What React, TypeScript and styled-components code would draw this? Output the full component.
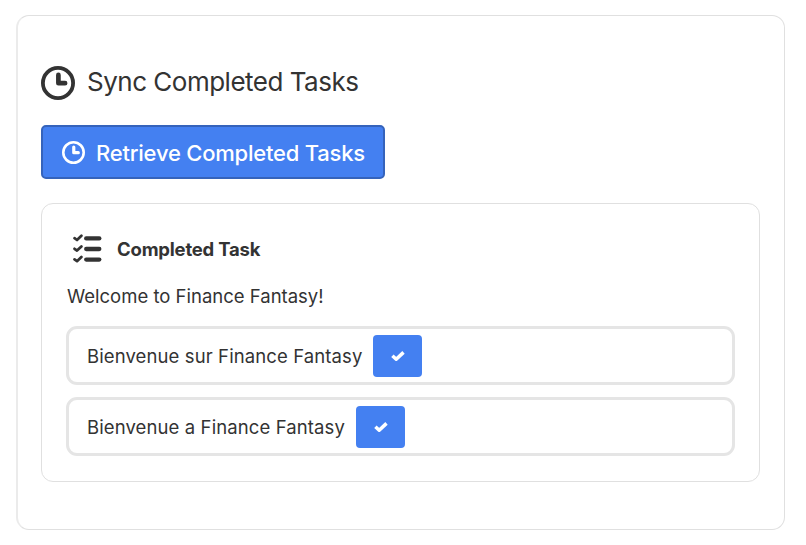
import React from "react";
import styled, { createGlobalStyle } from "styled-components";

const GlobalStyle = createGlobalStyle`
  * { box-sizing: border-box; }
  body {
    margin: 0;
    background: #fff;
    color: #333;
    font-family: Inter, "Liberation Sans", sans-serif;
  }
`;

const Card = styled.main`
  width: 769px;
  height: 515px;
  margin: 15px 0 0 16px;
  padding: 49px 24px 0 23px;
  border: 1px solid #e0e0e0;
  border-left: 2px solid #ebebeb;
  border-radius: 13px;
`;

const Heading = styled.h1`
  display: flex;
  align-items: center;
  gap: 12px;
  height: 36px;
  margin: 0 0 24px;
  font-size: 26px;
  font-weight: 400;
  letter-spacing: -0.5px;
  white-space: nowrap;
`;

const HeadingText = styled.span`
  padding-bottom: 3px;
`;

const RetrieveButton = styled.button`
  display: flex;
  align-items: center;
  gap: 11px;
  width: 344px;
  height: 54px;
  padding: 1px 0 0 19px;
  border: 2px solid #3563bb;
  border-radius: 5px;
  background: #4480f1;
  color: #fff;
  font: 500 22px Inter, sans-serif;
  letter-spacing: -0.22px;
  white-space: nowrap;
`;

const Panel = styled.section`
  width: 719px;
  height: 279px;
  margin-top: 24px;
  padding: 23px 24px 0;
  border: 1px solid #e0e0e0;
  border-radius: 12px;
`;

const PanelTitle = styled.h2`
  display: flex;
  align-items: center;
  gap: 15px;
  height: 43px;
  margin: 0;
  padding-left: 7px;
  font-size: 18.5px;
  font-weight: 700;
  letter-spacing: -0.2px;
`;

const Welcome = styled.p`
  height: 24px;
  margin: 14px 0 18px;
  font-size: 18.5px;
  line-height: 24px;
  letter-spacing: 0;
  padding-left: 1px;
`;

const TaskList = styled.ul`
  display: flex;
  flex-direction: column;
  gap: 12px;
  margin: 0;
  padding: 0;
  list-style: none;
`;

const TaskRow = styled.li`
  display: flex;
  align-items: center;
  height: 59px;
  padding-left: 18px;
  border: 3px solid #e5e5e5;
  border-radius: 11px;
  font-size: 18.5px;
`;

const TaskName = styled.span<{ $width: number }>`
  width: ${(p) => p.$width}px;
  letter-spacing: 0.11px;
  white-space: nowrap;
`;

const CheckButton = styled.button`
  display: grid;
  place-items: center;
  width: 49px;
  height: 42px;
  padding: 0;
  border: 0;
  border-radius: 4px;
  background: #4480f1;
`;

const Clock = ({ size }: { size: number }) => (
  <svg width={size} height={size} viewBox="0 0 34 34" fill="none" stroke="currentColor">
    <circle cx="17" cy="17" r="15.1" strokeWidth="3.8" />
    <path d="M17.4 8.9V17.2H24.1" strokeWidth="4.7" strokeLinecap="round" strokeLinejoin="round" />
  </svg>
);

const Checklist = () => (
  <svg width="29" height="30" viewBox="0 0 29 30" fill="none" stroke="currentColor" strokeLinecap="round" strokeLinejoin="round">
    {[0, 10.6, 21.2].map((y) => (
      <g key={y} transform={`translate(0 ${y})`}>
        <path d="M1.5 4.2L4 6L8.4 1.8" strokeWidth="2.7" />
        <path d="M13.2 4.4H26.3" strokeWidth="4.3" />
      </g>
    ))}
  </svg>
);

const Check = () => (
  <svg width="14" height="12" viewBox="0 0 14 12" fill="none" stroke="#fff" strokeWidth="3.5" strokeLinejoin="round">
    <path d="M1.4 5.7L5.2 9.2L12.5 2.4" />
  </svg>
);

const tasks = [
  { name: "Bienvenue sur Finance Fantasy", width: 286.4 },
  { name: "Bienvenue a Finance Fantasy", width: 269 },
];

export default function App() {
  return (
    <>
      <GlobalStyle />
      <Card>
        <Heading>
          <Clock size={34} />
          <HeadingText>Sync Completed Tasks</HeadingText>
        </Heading>
        <RetrieveButton>
          <Clock size={23} />
          Retrieve Completed Tasks
        </RetrieveButton>
        <Panel>
          <PanelTitle>
            <Checklist />
            Completed Task
          </PanelTitle>
          <Welcome>Welcome to Finance Fantasy!</Welcome>
          <TaskList>
            {tasks.map((task) => (
              <TaskRow key={task.name}>
                <TaskName $width={task.width}>{task.name}</TaskName>
                <CheckButton aria-label="Complete task">
                  <Check />
                </CheckButton>
              </TaskRow>
            ))}
          </TaskList>
        </Panel>
      </Card>
    </>
  );
}
